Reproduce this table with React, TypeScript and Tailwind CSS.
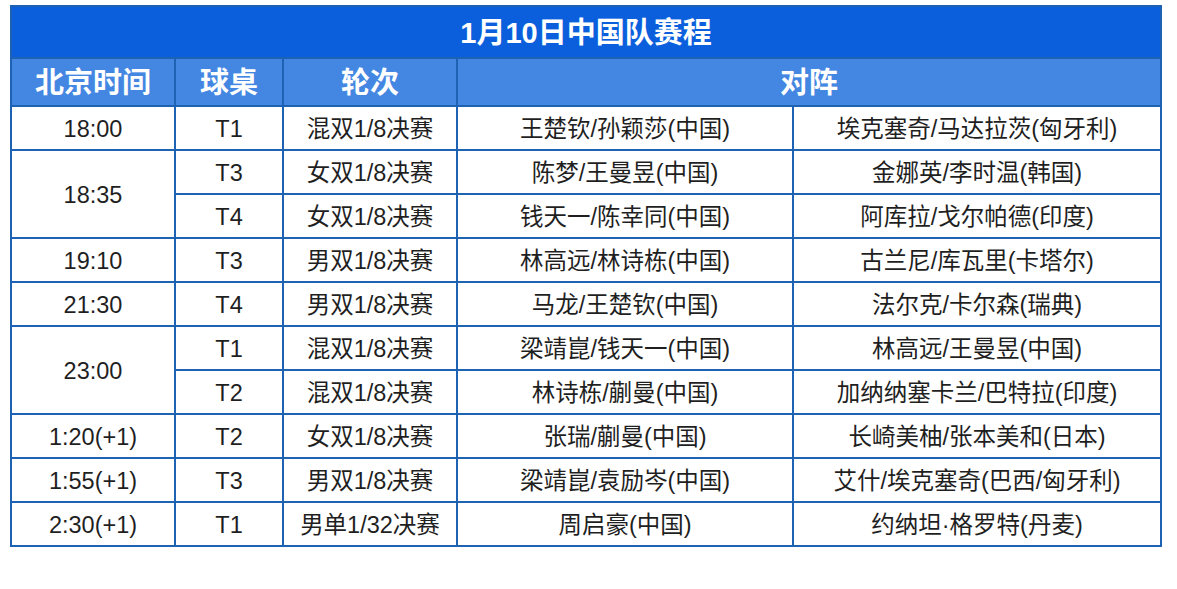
import React from "react";

type Row = { time?: string; span?: number; table: string; round: string; a: string; b: string };

const rows: Row[] = [
  { time: "18:00", span: 1, table: "T1", round: "混双1/8决赛", a: "王楚钦/孙颖莎(中国)", b: "埃克塞奇/马达拉茨(匈牙利)" },
  { time: "18:35", span: 2, table: "T3", round: "女双1/8决赛", a: "陈梦/王曼昱(中国)", b: "金娜英/李时温(韩国)" },
  { table: "T4", round: "女双1/8决赛", a: "钱天一/陈幸同(中国)", b: "阿库拉/戈尔帕德(印度)" },
  { time: "19:10", span: 1, table: "T3", round: "男双1/8决赛", a: "林高远/林诗栋(中国)", b: "古兰尼/库瓦里(卡塔尔)" },
  { time: "21:30", span: 1, table: "T4", round: "男双1/8决赛", a: "马龙/王楚钦(中国)", b: "法尔克/卡尔森(瑞典)" },
  { time: "23:00", span: 2, table: "T1", round: "混双1/8决赛", a: "梁靖崑/钱天一(中国)", b: "林高远/王曼昱(中国)" },
  { table: "T2", round: "混双1/8决赛", a: "林诗栋/蒯曼(中国)", b: "加纳纳塞卡兰/巴特拉(印度)" },
  { time: "1:20(+1)", span: 1, table: "T2", round: "女双1/8决赛", a: "张瑞/蒯曼(中国)", b: "长崎美柚/张本美和(日本)" },
  { time: "1:55(+1)", span: 1, table: "T3", round: "男双1/8决赛", a: "梁靖崑/袁励岑(中国)", b: "艾什/埃克塞奇(巴西/匈牙利)" },
  { time: "2:30(+1)", span: 1, table: "T1", round: "男单1/32决赛", a: "周启豪(中国)", b: "约纳坦·格罗特(丹麦)" },
];

const td = "border-2 border-[#1e62b3] text-center align-middle px-0 pb-0 pt-[4px]";
const th = "border-2 border-[#1e62b3] bg-[#4487e2] text-white text-[29px] font-bold px-0 pb-0 pt-[2px] leading-none";

export default function App() {
  return (
    <div
      className="w-[1177px] h-[589px] bg-white overflow-hidden"
      style={{ fontFamily: '"Liberation Sans", "Noto Sans CJK SC", sans-serif' }}
    >
      <table className="border-collapse table-fixed ml-[10px] mt-[5px] w-[1150px] text-[#1f1f1f]">
        <colgroup>
          <col className="w-[164px]" />
          <col className="w-[108px]" />
          <col className="w-[174px]" />
          <col className="w-[336px]" />
          <col className="w-[368px]" />
        </colgroup>
        <thead>
          <tr className="h-[52px]">
            <th
              colSpan={5}
              className="border-2 border-[#1e62b3] bg-[#0b5fdc] text-white text-[29px] font-bold text-center px-0 pb-0 pt-[2px] leading-none"
            >
              1月10日中国队赛程
            </th>
          </tr>
          <tr className="h-[48px]">
            <th className={th}>北京时间</th>
            <th className={th}>球桌</th>
            <th className={th}>轮次</th>
            <th colSpan={2} className={th}>对阵</th>
          </tr>
        </thead>
        <tbody className="text-[23.5px] leading-none">
          {rows.map((r, i) => (
            <tr key={i} className="h-[44px]">
              {r.time !== undefined && (
                <td rowSpan={r.span} className={td}>
                  {r.time}
                </td>
              )}
              <td className={td}>{r.table}</td>
              <td className={td}>{r.round}</td>
              <td className={td}>{r.a}</td>
              <td className={td}>{r.b}</td>
            </tr>
          ))}
        </tbody>
      </table>
    </div>
  );
}
